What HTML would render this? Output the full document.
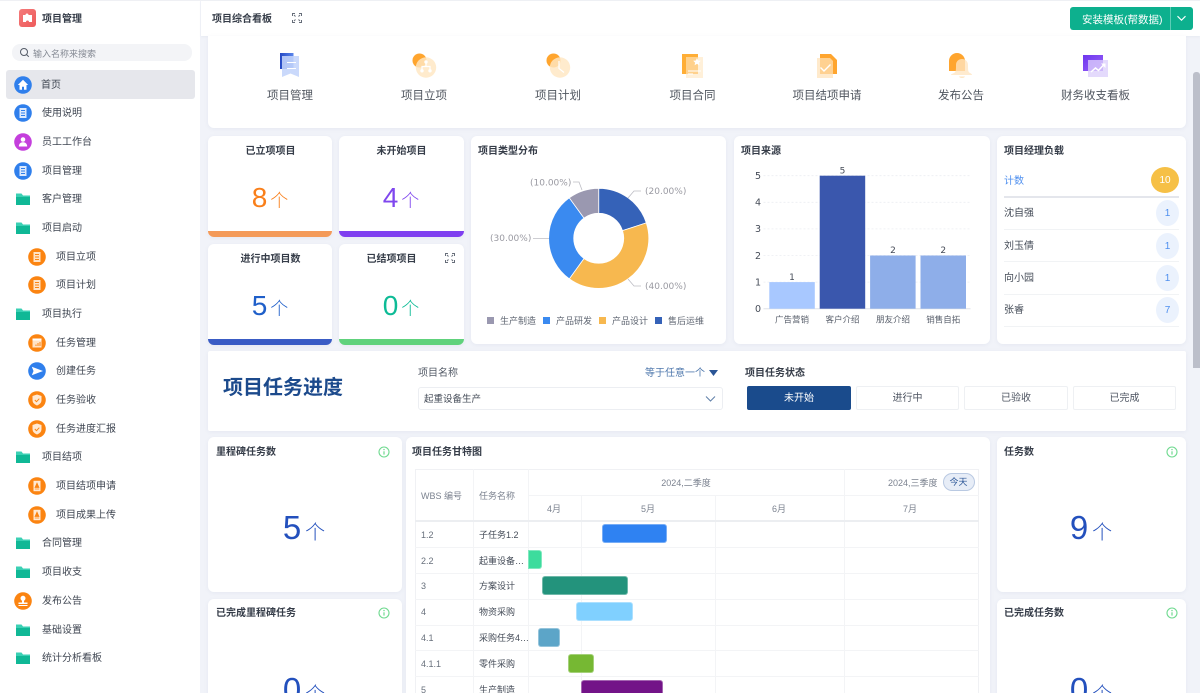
<!DOCTYPE html>
<html lang="zh"><head><meta charset="utf-8"><title>项目综合看板</title>
<style>
*{box-sizing:border-box;margin:0;padding:0}
html,body{width:1200px;height:693px;overflow:hidden;background:#f1f3f9;font-family:"Liberation Sans","Noto Sans CJK SC",sans-serif;color:#333a47}
#root{position:relative;width:1200px;height:693px;overflow:hidden;background:#f1f3f9;filter:blur(.3px)}
.a{position:absolute}
.t{position:absolute;font-size:10px;line-height:14px;height:14px;white-space:nowrap;margin-top:1.5px}
.b{font-weight:700;color:#353c48}
.c{transform:translateX(-50%)}
.card{position:absolute;background:#fff;border-radius:6px;box-shadow:0 1px 4px rgba(90,100,140,.07);overflow:hidden}
#side{position:absolute;left:0;top:1px;width:200px;height:692px;background:#fff}
.it{position:absolute;height:28px;font-size:10px;line-height:30px;color:#3f4652;white-space:nowrap}
.it svg{position:absolute;top:5px}
.l0{left:42px}.l0 svg{left:-28.5px}
.l1{left:56px}.l1 svg{left:-28px}
.num{position:absolute;display:flex;align-items:baseline;justify-content:center;white-space:nowrap;transform:translateX(-50%);font-weight:300}
.bar{position:absolute;left:0;right:0;bottom:0;height:6px}
.gl{position:absolute;background:#f3f4f6}
.gb{position:absolute;border-radius:3px;height:19px;border:1px solid rgba(255,255,255,.35)}
.g{font-size:9px;color:#68707c;margin-top:1px}
.lb{font-size:11.5px;color:#50565f;height:16px;line-height:16px;top:86.5px}
.btn{position:absolute;top:386px;height:24px;background:#fff;border:1px solid #eef0f3;border-radius:2px;font-size:10px;line-height:24px;text-align:center;color:#4e5562}
.mgr{position:absolute;left:1004px;font-size:10px;line-height:14px;color:#454c58;margin-top:1.5px}
.pill{position:absolute;left:1156px;width:23px;height:26px;border-radius:50%;background:#ebf2fd;color:#4e8fef;font-size:10px;line-height:28px;text-align:center}
.ln{position:absolute;left:1004px;width:175px;height:1px;background:#f1f3f5}
</style></head><body>
<div id="root">
<svg width="0" height="0" style="position:absolute"><defs>
<linearGradient id="bl" x1="0" x2="1" y1="0" y2="0"><stop offset="0" stop-color="#2448c4"/><stop offset="1" stop-color="#5b86ec"/></linearGradient>
<linearGradient id="pu" x1="0" x2="1" y1="0" y2="1"><stop offset="0" stop-color="#6d36ee"/><stop offset="1" stop-color="#9a62f8"/></linearGradient>
<symbol id="fold" viewBox="0 0 18 18"><path d="M2 3.500h5.500l1.500 2h7v2H2z" fill="#3bd0b4"/><path d="M2 7h14v8H2z" fill="#10b896"/></symbol>
<symbol id="doc" viewBox="0 0 18 18"><circle cx="9" cy="9" r="8.800" fill="#2f7fec"/><path d="M5.500 4h7v10h-7z" fill="#dce9fd"/><path d="M7 6.500h4M7 9h4M7 11.500h4" stroke="#2f7fec" stroke-width=".9"/></symbol>
<symbol id="odoc" viewBox="0 0 18 18"><circle cx="9" cy="9" r="8.800" fill="#fb8411"/><path d="M5.500 4h7v10h-7z" fill="#ffe3c6"/><path d="M7 6.500h4M7 9h4M7 11.500h4" stroke="#fb8411" stroke-width=".9"/></symbol>
<symbol id="shield" viewBox="0 0 18 18"><circle cx="9" cy="9" r="8.800" fill="#fb8411"/><path d="M9 3.500l4.500 1.500v4c0 3-2.200 4.600-4.500 5.500C6.700 13.600 4.500 12 4.500 9V5z" fill="#ffe9d2"/><path d="M6.800 9l1.700 1.700 2.800-3" fill="none" stroke="#fb8411" stroke-width="1"/></symbol>
<symbol id="stamp" viewBox="0 0 18 18"><circle cx="9" cy="9" r="8.800" fill="#fb8411"/><path d="M5.500 3.800h7v10.400h-7z" fill="#ffe9d2"/><path d="M9 6l2 4.500H7zM6.800 12h4.400" fill="#fb8411" stroke="#fb8411" stroke-width=".7"/></symbol>
<symbol id="info" viewBox="0 0 12 12"><circle cx="6" cy="6" r="5" fill="none" stroke="#6fd98f" stroke-width="1.100"/><path d="M6 5.300v3.300" stroke="#6fd98f" stroke-width="1.200"/><circle cx="6" cy="3.600" r=".7" fill="#6fd98f"/></symbol>
<symbol id="exp" viewBox="0 0 10 10"><path d="M.5 3V.5H3M7 .5h2.500V3M.5 7v2.500H3M9.500 7v2.500H7M2 2l1.500 1.500M8 2L6.500 3.500M2 8l1.500-1.500M8 8L6.500 6.500" fill="none" stroke="#666d79" stroke-width="1"/></symbol>
</defs></svg>

<div class="a" style="left:0;top:0;width:1200px;height:1px;background:#eff0f4"></div>
<div id="side"></div>
<div class="a" style="left:18.500px;top:9px;width:17.500px;height:18px;border-radius:3px;background:linear-gradient(135deg,#f47b7b,#ee5a5a)"></div>
<svg class="a" style="left:22px;top:13px" width="11" height="10" viewBox="0 0 11 10"><path d="M1 2h2.500a1.500 1.500 0 0 1 3 0H10v7H7a1.500 1.500 0 0 0-3 0H1z" fill="#fff"/></svg>
<div class="t b" style="left:42px;top:11px">项目管理</div>
<div class="a" style="left:12px;top:44px;width:180px;height:16.500px;border-radius:8px;background:#f3f4f7"></div>
<svg class="a" style="left:19px;top:47px" width="11" height="11" viewBox="0 0 11 11"><circle cx="5" cy="5" r="3.500" fill="none" stroke="#555c68" stroke-width="1"/><path d="M7.600 7.600l2.200 2.200" stroke="#555c68" stroke-width="1"/></svg>
<div class="t" style="left:33px;top:45px;font-size:9px;color:#858a94">输入名称来搜索</div>
<div class="a" style="left:6px;top:70px;width:189px;height:29px;border-radius:3px;background:#e6e7ec"></div>

<div class="it l0" style="top:70.500px;left:41px">首页<svg style="left:-27.500px" width="18" height="18" viewBox="0 0 18 18"><circle cx="9" cy="9" r="8.800" fill="#2f7fec"/><path d="M9 3.800L3.800 9H5.500v4.700h2.500v-3h2v3h2.500V9h1.700z" fill="#fff"/></svg></div>
<div class="it l0" style="top:99px">使用说明<svg width="18" height="18"><use href="#doc"/></svg></div>
<div class="it l0" style="top:128px">员工工作台<svg width="18" height="18" viewBox="0 0 18 18"><circle cx="9" cy="9" r="8.800" fill="#c43fdc"/><circle cx="9" cy="6.500" r="2.300" fill="#fff"/><path d="M4.800 13.500c.2-3 2-4.200 4.200-4.200s4 1.200 4.200 4.200z" fill="#fff"/></svg></div>
<div class="it l0" style="top:156.500px">项目管理<svg width="18" height="18"><use href="#doc"/></svg></div>
<div class="it l0" style="top:185px">客户管理<svg width="18" height="18"><use href="#fold"/></svg></div>
<div class="it l0" style="top:214px">项目启动<svg width="18" height="18"><use href="#fold"/></svg></div>
<div class="it l1" style="top:242.500px">项目立项<svg width="18" height="18"><use href="#odoc"/></svg></div>
<div class="it l1" style="top:271px">项目计划<svg width="18" height="18"><use href="#odoc"/></svg></div>
<div class="it l0" style="top:300px">项目执行<svg width="18" height="18"><use href="#fold"/></svg></div>
<div class="it l1" style="top:328.500px">任务管理<svg width="18" height="18" viewBox="0 0 18 18"><circle cx="9" cy="9" r="8.800" fill="#fb8411"/><path d="M4.500 4.500h9v9h-9z" fill="#ffe3c6"/><path d="M4.500 4.500h9v2h-9z" fill="#fff"/><path d="M8 12v-1.500M10 12V9M12 12V8" stroke="#fb8411"/></svg></div>
<div class="it l1" style="top:357px">创建任务<svg width="18" height="18" viewBox="0 0 18 18"><circle cx="9" cy="9" r="8.800" fill="#2f7fec"/><path d="M3.800 4.800L15 9 3.800 13.200l1.700-4.200z" fill="#fff"/></svg></div>
<div class="it l1" style="top:386px">任务验收<svg width="18" height="18"><use href="#shield"/></svg></div>
<div class="it l1" style="top:414.500px">任务进度汇报<svg width="18" height="18"><use href="#shield"/></svg></div>
<div class="it l0" style="top:443px">项目结项<svg width="18" height="18"><use href="#fold"/></svg></div>
<div class="it l1" style="top:472px">项目结项申请<svg width="18" height="18"><use href="#stamp"/></svg></div>
<div class="it l1" style="top:500.500px">项目成果上传<svg width="18" height="18"><use href="#stamp"/></svg></div>
<div class="it l0" style="top:529px">合同管理<svg width="18" height="18"><use href="#fold"/></svg></div>
<div class="it l0" style="top:558px">项目收支<svg width="18" height="18"><use href="#fold"/></svg></div>
<div class="it l0" style="top:587px">发布公告<svg width="18" height="18" viewBox="0 0 18 18"><circle cx="9" cy="9" r="8.800" fill="#fb8411"/><circle cx="9" cy="6.300" r="2.500" fill="#fff"/><path d="M8 8h2v2.500h3.500V12h-9v-1.500H8zM4.500 13h9v1h-9z" fill="#fff"/></svg></div>
<div class="it l0" style="top:615.500px">基础设置<svg width="18" height="18"><use href="#fold"/></svg></div>
<div class="it l0" style="top:644px">统计分析看板<svg width="18" height="18"><use href="#fold"/></svg></div>

<!-- header -->
<div class="a" style="left:201px;top:1px;width:999px;height:34.500px;background:#fff;box-shadow:0 1px 2px rgba(90,100,140,.06)"></div>
<div class="t b" style="left:212px;top:11px">项目综合看板</div>
<svg class="a" style="left:291.500px;top:13px" width="10" height="10"><use href="#exp"/></svg>
<div class="a" style="left:1070px;top:7px;width:123px;height:23px;border-radius:3px;background:#0db08e"></div>
<div class="a" style="left:1170px;top:7px;width:1px;height:23px;background:#5dcdb6"></div>
<div class="t" style="left:1082px;top:11.500px;color:#fff;font-size:10.500px;margin-top:1px">安装模板(帮数据)</div>
<svg class="a" style="left:1176px;top:15px" width="11" height="7" viewBox="0 0 11 7"><path d="M1.500 1.200l4 4 4-4" fill="none" stroke="#fff" stroke-width="1.100"/></svg>

<!-- scrollbar -->
<div class="a" style="left:1193px;top:72px;width:7px;height:296px;border-radius:3px 3px 0 0;background:#bcbfca"></div>

<!-- top shortcuts -->
<div class="card" style="left:208px;top:36px;width:978px;height:92px;border-radius:0 0 6px 6px"></div>
<svg class="a" style="left:278px;top:52px" width="24" height="26" viewBox="0 0 24 26"><path d="M2 1h13.500v16H2z" fill="url(#bl)"/><path d="M4 4h17v21l-8.500-3.500L4 25z" fill="#c3d4fa" opacity=".88"/><path d="M9 10.500h9M9 16.500h9" stroke="#fff" stroke-width="1"/></svg>
<svg class="a" style="left:411px;top:52px" width="26" height="26" viewBox="0 0 26 26"><circle cx="8.500" cy="8.500" r="7" fill="#ffa52e"/><circle cx="15" cy="15.500" r="10.200" fill="#ffe6c2" opacity=".82"/><path d="M15 10v4M11 18v-3.500h8V18" fill="none" stroke="#fff" stroke-width="1.200"/><circle cx="15" cy="10" r="1.700" fill="#fff"/><circle cx="11" cy="18.800" r="1.700" fill="#fff"/><circle cx="19" cy="18.800" r="1.700" fill="#fff"/></svg>
<svg class="a" style="left:545px;top:52px" width="26" height="26" viewBox="0 0 26 26"><circle cx="8.500" cy="8.500" r="7" fill="#ffa52e"/><circle cx="15" cy="15.500" r="10.200" fill="#ffe6c2" opacity=".82"/><path d="M14 9v7.500l5 4" fill="none" stroke="#fff" stroke-width="1.200"/></svg>
<svg class="a" style="left:680px;top:52px" width="24" height="26" viewBox="0 0 24 26"><path d="M2 2h16v20H2z" fill="#ffae36"/><path d="M6 5h17v21H6z" fill="#ffe6c2" opacity=".62"/><path d="M17 6l1.200 2.500 2.600.3-1.900 1.800.5 2.600-2.400-1.300-2.400 1.300.5-2.600-1.900-1.800 2.600-.3z" fill="#fff"/><path d="M8 19h13M8 22h5" stroke="#fff" stroke-width="1.100"/></svg>
<svg class="a" style="left:816px;top:52px" width="22" height="26" viewBox="0 0 22 26"><path d="M4 2h11l6 6v14H4z" fill="#ffa52e"/><path d="M1 6h13l3 3v17H1z" fill="#ffe2b8" opacity=".72"/><path d="M4.500 15.500l3.500 3.500 6.500-6.500" fill="none" stroke="#fff" stroke-width="1.400"/></svg>
<svg class="a" style="left:948px;top:52px" width="26" height="28" viewBox="0 0 26 28"><path d="M1 19V9a8 8 0 0 1 16 0v10z" fill="#ffa52e"/><path d="M6 21c2-1 2-3 2-8 0-4 3-6 6-6s6 2 6 6c0 5 0 7 2 8 1 .5 2 1 2 2H3c0-1 2-1.500 3-2z" fill="#ffe6c2" opacity=".78"/><path d="M11 24.500h6c-.5 2-5.500 2-6 0z" fill="#ffe6c2"/></svg>
<svg class="a" style="left:1083px;top:53px" width="26" height="25" viewBox="0 0 26 25"><path d="M0 2h20v16H0z" fill="url(#pu)"/><path d="M5 7h20v17H5z" fill="#ddcffb" opacity=".78"/><path d="M8 19l4.500-4 3 2.500 5-5.500" fill="none" stroke="#fff" stroke-width="1.500"/><path d="M18 10.500h4.500V15z" fill="#fff"/></svg>
<div class="t c lb" style="left:290px">项目管理</div>
<div class="t c lb" style="left:424px">项目立项</div>
<div class="t c lb" style="left:558px">项目计划</div>
<div class="t c lb" style="left:692.500px">项目合同</div>
<div class="t c lb" style="left:827px">项目结项申请</div>
<div class="t c lb" style="left:961px">发布公告</div>
<div class="t c lb" style="left:1095.500px">财务收支看板</div>

<!-- stat cards -->
<div class="card" style="left:208px;top:136px;width:124px;height:100.500px"><div class="bar" style="background:#f49a59"></div></div>
<div class="card" style="left:339px;top:136px;width:124.500px;height:100.500px"><div class="bar" style="background:#7f3ff0"></div></div>
<div class="card" style="left:208px;top:244px;width:124px;height:100.500px"><div class="bar" style="background:#3a5cc5"></div></div>
<div class="card" style="left:339px;top:244px;width:124.500px;height:100.500px"><div class="bar" style="background:#60d27c"></div></div>
<div class="t b c" style="left:270.500px;top:143px">已立项项目</div>
<div class="t b c" style="left:401.500px;top:143px">未开始项目</div>
<div class="t b c" style="left:270.500px;top:251px">进行中项目数</div>
<div class="t b c" style="left:391.500px;top:251px">已结项项目</div>
<svg class="a" style="left:445px;top:253px" width="10" height="10"><use href="#exp"/></svg>
<div class="num" style="left:270px;top:178px;color:#f97f1a;line-height:40px"><span style="font-size:28px">8</span><span style="font-size:18px;margin-left:3px">个</span></div>
<div class="num" style="left:401px;top:178px;color:#7f47ee;line-height:40px"><span style="font-size:28px">4</span><span style="font-size:18px;margin-left:3px">个</span></div>
<div class="num" style="left:270px;top:286px;color:#1f5fc9;line-height:40px"><span style="font-size:28px">5</span><span style="font-size:18px;margin-left:3px">个</span></div>
<div class="num" style="left:401px;top:286px;color:#0dbb96;line-height:40px"><span style="font-size:28px">0</span><span style="font-size:18px;margin-left:3px">个</span></div>

<!-- pie card -->
<div class="card" style="left:471px;top:136px;width:255px;height:208px"></div>
<div class="t b" style="left:478px;top:143px">项目类型分布</div>
<svg class="a" style="left:471px;top:136px" width="255" height="208" viewBox="471 136 255 208">
<g stroke="#fff" stroke-width=".8">
<path d="M598.700 188.300A50 50 0 0 1 646.300 222.900L622.500 230.600A25 25 0 0 0 598.700 213.300Z" fill="#3562b8"/>
<path d="M646.300 222.900A50 50 0 0 1 569.300 278.800L584 258.500A25 25 0 0 0 622.500 230.600Z" fill="#f7b84f"/>
<path d="M569.300 278.800A50 50 0 0 1 569.300 197.800L584 218.100A25 25 0 0 0 584 258.500Z" fill="#3a8af0"/>
<path d="M569.300 197.800A50 50 0 0 1 598.700 188.300V213.300A25 25 0 0 0 584 218.100Z" fill="#9a98b0"/>
</g>
<g fill="none" stroke="#bdbdc4" stroke-width=".8">
<path d="M628 198l6-7h7M628 279l6 7h7M549 238.500h-16M582 190l-3-8h-6"/>
</g>
<g font-family="DejaVu Sans,sans-serif" font-size="9" fill="#9a9aa2">
<text x="645" y="194">(20.00%)</text><text x="645" y="289">(40.00%)</text><text x="490" y="241">(30.00%)</text><text x="530" y="185.500">(10.00%)</text>
</g>
<g font-size="9" fill="#5f6672" font-family="Liberation Sans,Noto Sans CJK SC,sans-serif">
<rect x="487" y="317" width="7" height="7" fill="#9a98b0"/><text x="500" y="324">生产制造</text>
<rect x="543" y="317" width="7" height="7" fill="#3a8af0"/><text x="556" y="324">产品研发</text>
<rect x="599" y="317" width="7" height="7" fill="#f7b84f"/><text x="612" y="324">产品设计</text>
<rect x="655" y="317" width="7" height="7" fill="#3562b8"/><text x="668" y="324">售后运维</text>
</g></svg>

<!-- bar card -->
<div class="card" style="left:734px;top:136px;width:256px;height:208px"></div>
<div class="t b" style="left:741px;top:143px">项目来源</div>
<svg class="a" style="left:734px;top:136px" width="256" height="208" viewBox="734 136 256 208">
<g stroke="#eceef2" stroke-width=".8" stroke-dasharray="2 2"><path d="M763.500 175.700H970.500M763.500 202.300H970.500M763.500 228.900H970.500M763.500 255.500H970.500M763.500 282.100H970.500"/></g>
<path d="M763.500 308.700H970.500" stroke="#dfe2e8"/>
<rect x="769.300" y="282.100" width="45.500" height="26.600" fill="#a8c8ff"/>
<rect x="819.700" y="175.700" width="45.500" height="133" fill="#3a57ad"/>
<rect x="870.100" y="255.500" width="45.500" height="53.200" fill="#8eaee9"/>
<rect x="920.500" y="255.500" width="45.500" height="53.200" fill="#8eaee9"/>
<g font-family="DejaVu Sans,sans-serif" font-size="9.500" fill="#464c58" text-anchor="end">
<text x="761" y="179">5</text><text x="761" y="205.600">4</text><text x="761" y="232.200">3</text><text x="761" y="258.800">2</text><text x="761" y="285.400">1</text><text x="761" y="312">0</text></g>
<g font-family="DejaVu Sans,sans-serif" font-size="9" fill="#464c58" text-anchor="middle">
<text x="792" y="280">1</text><text x="842.500" y="173.500">5</text><text x="893" y="253">2</text><text x="943.300" y="253">2</text></g>
<g font-family="Liberation Sans,Noto Sans CJK SC,sans-serif" font-size="8.500" fill="#5a606c" text-anchor="middle">
<text x="792" y="322.500">广告营销</text><text x="842.500" y="322.500">客户介绍</text><text x="893" y="322.500">朋友介绍</text><text x="943.300" y="322.500">销售自拓</text></g></svg>

<!-- manager card -->
<div class="card" style="left:997px;top:136px;width:189px;height:208px"></div>
<div class="t b" style="left:1004px;top:143px">项目经理负载</div>
<div class="mgr" style="top:173px;color:#4e8fef">计数</div>
<div class="a" style="left:1151px;top:167px;width:28px;height:26px;border-radius:50%;background:#f6c046;color:#fff;font-size:10px;line-height:28px;text-align:center">10</div>
<div class="a" style="left:1004px;top:196px;width:175px;height:1.500px;background:#e4e6ec"></div>
<div class="mgr" style="top:205.500px">沈自强</div><div class="pill" style="top:200px">1</div><div class="ln" style="top:228.500px"></div>
<div class="mgr" style="top:238px">刘玉倩</div><div class="pill" style="top:232.500px">1</div><div class="ln" style="top:261px"></div>
<div class="mgr" style="top:270px">向小园</div><div class="pill" style="top:265px">1</div><div class="ln" style="top:293.500px"></div>
<div class="mgr" style="top:302.500px">张睿</div><div class="pill" style="top:297px">7</div><div class="ln" style="top:325.500px"></div>

<!-- filter band -->
<div class="card" style="left:208px;top:351px;width:978px;height:79.500px;border-radius:2px"></div>
<div class="t" style="left:223px;top:372.500px;font-size:20px;line-height:28px;height:28px;font-weight:700;color:#1c4a8c">项目任务进度</div>
<div class="t" style="left:418px;top:365px;color:#555c68">项目名称</div>
<div class="t" style="left:645px;top:365px;color:#4f78ad">等于任意一个</div>
<svg class="a" style="left:709px;top:370px" width="9" height="6"><path d="M0 0h9L4.500 6z" fill="#2a5596"/></svg>
<div class="t b" style="left:745px;top:365px">项目任务状态</div>
<div class="a" style="left:418px;top:387px;width:305px;height:23px;background:#fff;border:1px solid #eceef2;border-radius:3px"></div>
<div class="t" style="left:424px;top:391.500px;font-size:9.500px;color:#454c58">起重设备生产</div>
<svg class="a" style="left:705px;top:395px" width="11" height="8" viewBox="0 0 11 8"><path d="M1 1.500l4.500 4.500 4.500-4.500" fill="none" stroke="#5f7fa8" stroke-width="1"/></svg>
<div class="btn" style="left:747px;width:104px;background:#1a4b8c;border-color:#1a4b8c;color:#fff">未开始</div>
<div class="btn" style="left:856px;width:103px">进行中</div>
<div class="btn" style="left:964px;width:104px">已验收</div>
<div class="btn" style="left:1073px;width:103px">已完成</div>

<!-- left KPI -->
<div class="card" style="left:208px;top:437px;width:194px;height:154.500px"></div>
<div class="card" style="left:208px;top:599px;width:194px;height:110px"></div>
<div class="t b" style="left:216px;top:444px">里程碑任务数</div>
<div class="t b" style="left:216px;top:605.500px">已完成里程碑任务</div>
<svg class="a" style="left:377.500px;top:445.500px" width="12" height="12"><use href="#info"/></svg>
<svg class="a" style="left:377.500px;top:607px" width="12" height="12"><use href="#info"/></svg>
<div class="num" style="left:304px;top:504px;color:#2350bd;line-height:48px"><span style="font-size:33px">5</span><span style="font-size:20px;margin-left:4px">个</span></div>
<div class="num" style="left:304px;top:666px;color:#2350bd;line-height:48px"><span style="font-size:33px">0</span><span style="font-size:20px;margin-left:4px">个</span></div>

<!-- gantt -->
<div class="card" style="left:405.500px;top:437px;width:584px;height:270px"></div>
<div class="t b" style="left:412px;top:444px">项目任务甘特图</div>
<div class="a" style="left:415px;top:469px;width:564px;height:224px;background:#fff;border:1px solid #f0f1f4;border-bottom:0"></div>
<div class="gl" style="left:472.500px;top:469px;width:1px;height:224px"></div>
<div class="gl" style="left:527.500px;top:469px;width:1px;height:224px"></div>
<div class="gl" style="left:843.500px;top:469px;width:1px;height:224px"></div>
<div class="gl" style="left:580.500px;top:495px;width:1px;height:198px"></div>
<div class="gl" style="left:714.500px;top:495px;width:1px;height:198px"></div>
<div class="gl" style="left:528px;top:494.500px;width:451px;height:1px"></div>
<div class="gl" style="left:415px;top:520px;width:564px;height:1.500px;background:#eceef1"></div>
<div class="gl" style="left:415px;top:546.500px;width:564px;height:1px"></div>
<div class="gl" style="left:415px;top:572.500px;width:564px;height:1px"></div>
<div class="gl" style="left:415px;top:598.500px;width:564px;height:1px"></div>
<div class="gl" style="left:415px;top:624.500px;width:564px;height:1px"></div>
<div class="gl" style="left:415px;top:650px;width:564px;height:1px"></div>
<div class="gl" style="left:415px;top:676px;width:564px;height:1px"></div>
<div class="t g" style="left:421px;top:488px;color:#7c8390">WBS 编号</div>
<div class="t g" style="left:479px;top:488px;color:#7c8390">任务名称</div>
<div class="t g c" style="left:686px;top:475px;color:#7c8390">2024,二季度</div>
<div class="t g" style="left:888px;top:475px;color:#7c8390">2024,三季度</div>
<div class="a" style="left:942.500px;top:473px;width:32px;height:18px;border-radius:9px;background:#e7edf7;border:1px solid #b9c9e2;color:#2a5596;font-size:9px;line-height:17px;text-align:center">今天</div>
<div class="t g c" style="left:554px;top:501px;color:#7c8390">4月</div>
<div class="t g c" style="left:648px;top:501px;color:#7c8390">5月</div>
<div class="t g c" style="left:779px;top:501px;color:#7c8390">6月</div>
<div class="t g c" style="left:910px;top:501px;color:#7c8390">7月</div>
<div class="t g" style="left:421px;top:526.500px">1.2</div><div class="t g" style="left:479px;top:526.500px;color:#454c58">子任务1.2</div>
<div class="t g" style="left:421px;top:552.500px">2.2</div><div class="t g" style="left:479px;top:552.500px;color:#454c58">起重设备…</div>
<div class="t g" style="left:421px;top:578px">3</div><div class="t g" style="left:479px;top:578px;color:#454c58">方案设计</div>
<div class="t g" style="left:421px;top:604px">4</div><div class="t g" style="left:479px;top:604px;color:#454c58">物资采购</div>
<div class="t g" style="left:421px;top:630px">4.1</div><div class="t g" style="left:479px;top:630px;color:#454c58">采购任务4…</div>
<div class="t g" style="left:421px;top:656px">4.1.1</div><div class="t g" style="left:479px;top:656px;color:#454c58">零件采购</div>
<div class="t g" style="left:421px;top:682px">5</div><div class="t g" style="left:479px;top:682px;color:#454c58">生产制造</div>
<div class="gb" style="left:602px;top:524px;width:65px;background:#2f82f2"></div>
<div class="gb" style="left:528px;top:550px;width:14px;background:#3ddc9d;border-radius:0 3px 3px 0"></div>
<div class="gb" style="left:542px;top:576px;width:86px;background:#23937c"></div>
<div class="gb" style="left:576px;top:602px;width:57px;background:#80d0ff"></div>
<div class="gb" style="left:538px;top:628px;width:21.500px;background:#5ca5c8"></div>
<div class="gb" style="left:568px;top:654px;width:26px;background:#76b833"></div>
<div class="gb" style="left:581px;top:680px;width:82px;background:#731488"></div>

<!-- right KPI -->
<div class="card" style="left:997px;top:437px;width:189px;height:154.500px"></div>
<div class="card" style="left:997px;top:599px;width:189px;height:110px"></div>
<div class="t b" style="left:1004px;top:444px">任务数</div>
<div class="t b" style="left:1004px;top:605.500px">已完成任务数</div>
<svg class="a" style="left:1166px;top:445.500px" width="12" height="12"><use href="#info"/></svg>
<svg class="a" style="left:1166px;top:607px" width="12" height="12"><use href="#info"/></svg>
<div class="num" style="left:1091px;top:504px;color:#2350bd;line-height:48px"><span style="font-size:33px">9</span><span style="font-size:20px;margin-left:4px">个</span></div>
<div class="num" style="left:1091px;top:666px;color:#2350bd;line-height:48px"><span style="font-size:33px">0</span><span style="font-size:20px;margin-left:4px">个</span></div>
</div>
</body></html>
